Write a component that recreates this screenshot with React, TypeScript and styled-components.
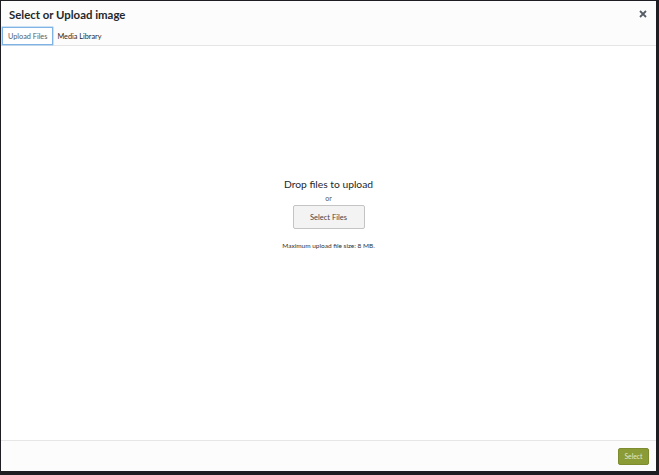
import React from "react";
import styled, { createGlobalStyle } from "styled-components";

const Global = createGlobalStyle`
  html, body { margin: 0; padding: 0; background: #1d1d22; }
  body { font-family: "Lato", "Noto Sans", sans-serif; color: #23282d; }
  #root { width: 659px; height: 475px; }
`;

const Frame = styled.div`
  width: 659px;
  height: 475px;
  box-sizing: border-box;
  padding: 1px 3px 4px 1px;
  display: flex;
`;

const Dialog = styled.div`
  flex: 1;
  display: flex;
  flex-direction: column;
  background: #fff;
  overflow: hidden;
`;

const Header = styled.div`
  display: flex;
  flex-direction: column;
  border-bottom: 1px solid #e6e6e6;
  background: #fcfcfc;
`;

const TitleRow = styled.div`
  display: flex;
  align-items: center;
  justify-content: space-between;
  height: 26px;
  padding: 0 7px 0 8px;
`;

const Title = styled.h1`
  margin: 0;
  font-size: 11.4px;
  font-weight: 700;
  color: #23282d;
`;

const Close = styled.button`
  border: 0;
  background: none;
  padding: 0;
  width: 12px;
  height: 12px;
  display: flex;
  align-items: center;
  justify-content: center;
  color: #555d66;
  cursor: pointer;
`;

const Tabs = styled.div`
  display: flex;
  align-items: stretch;
  height: 18px;
  padding: 0 1px;
`;

const Tab = styled.button<{ $active?: boolean }>`
  font-family: inherit;
  font-size: 7.3px;
  color: ${(p) => (p.$active ? "#555d66" : "#23282d")};
  background: ${(p) => (p.$active ? "#fff" : "transparent")};
  border: 1px solid ${(p) => (p.$active ? "#7fb3e6" : "transparent")};
  box-shadow: ${(p) => (p.$active ? "0 0 0 0.5px #9ec6ee" : "none")};
  padding: 0 ${(p) => (p.$active ? "5px" : "3px")};
  margin: 0;
  display: flex;
  align-items: center;
`;

const Body = styled.div`
  flex: 1;
  display: flex;
  flex-direction: column;
  align-items: center;
  justify-content: center;
  padding-bottom: 60px;
`;

const DropTitle = styled.div`
  font-size: 10.3px;
  color: #23282d;
  line-height: 14px;
`;

const Or = styled.div`
  font-size: 7px;
  color: #555555;
  margin-top: 2px;
  line-height: 10px;
`;

const SelectFiles = styled.button`
  margin-top: 2px;
  width: 72px;
  height: 24px;
  background: #f3f3f3;
  border: 1px solid #c4c4c4;
  border-radius: 2px;
  font-family: inherit;
  font-size: 7.5px;
  color: #444;
`;

const MaxSize = styled.div`
  margin-top: 13px;
  font-size: 6.5px;
  color: #333;
`;

const Footer = styled.div`
  height: 30px;
  border-top: 1px solid #e6e6e6;
  background: #fcfcfc;
  display: flex;
  align-items: center;
  justify-content: flex-end;
  padding: 0 7px 0 0;
`;

const Primary = styled.button`
  width: 31px;
  height: 17px;
  background: #8b9b35;
  border: 1px solid #7d8c2e;
  border-radius: 2px;
  font-family: inherit;
  font-size: 6.8px;
  color: #e3e8c8;
  padding: 0;
`;

export default function App() {
  return (
    <>
      <Global />
      <Frame>
        <Dialog>
          <Header>
            <TitleRow>
              <Title>Select or Upload image</Title>
              <Close aria-label="Close">
                <svg width="8" height="8" viewBox="0 0 8 8">
                  <path d="M1 1L7 7M7 1L1 7" stroke="currentColor" strokeWidth="1.8" />
                </svg>
              </Close>
            </TitleRow>
            <Tabs>
              <Tab $active>Upload Files</Tab>
              <Tab>Media Library</Tab>
            </Tabs>
          </Header>
          <Body>
            <DropTitle>Drop files to upload</DropTitle>
            <Or>or</Or>
            <SelectFiles>Select Files</SelectFiles>
            <MaxSize>Maximum upload file size: 8 MB.</MaxSize>
          </Body>
          <Footer>
            <Primary>Select</Primary>
          </Footer>
        </Dialog>
      </Frame>
    </>
  );
}
